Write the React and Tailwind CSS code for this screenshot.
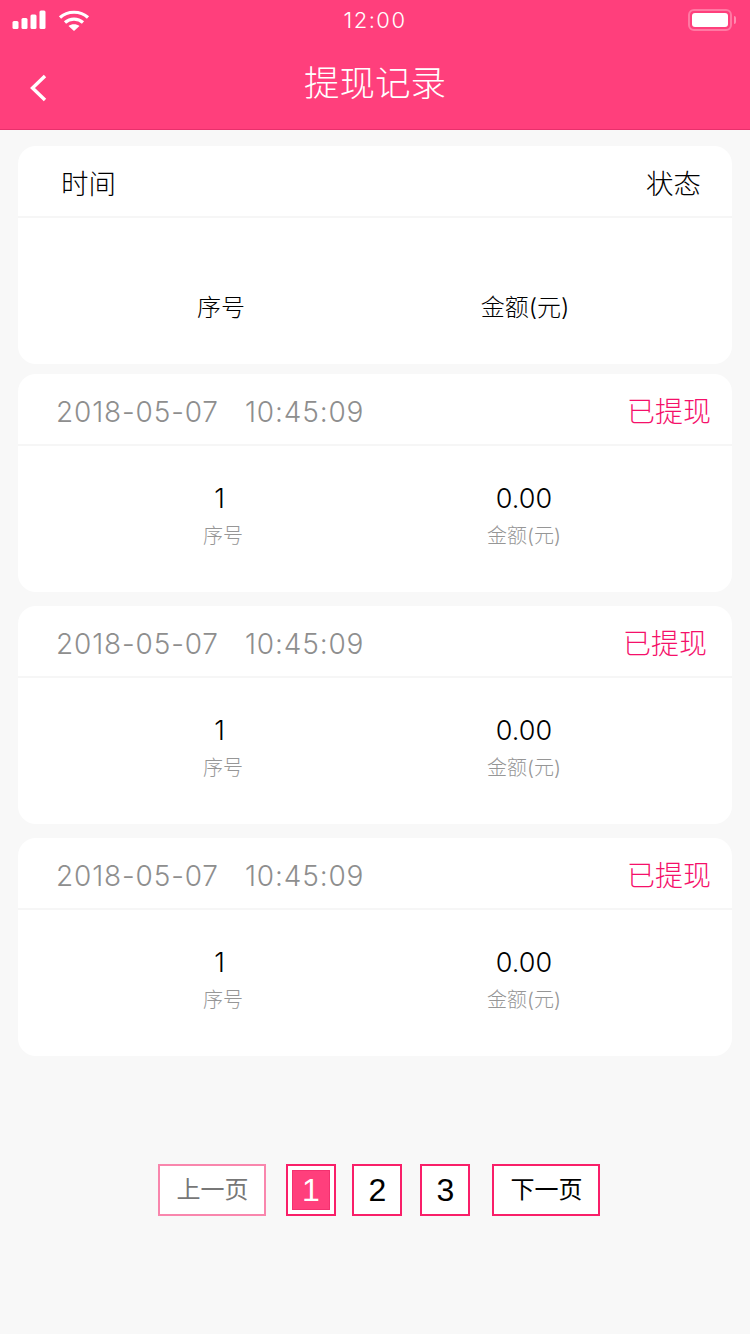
import React from "react";

const font = "font-['Inter','Noto_Sans_CJK_SC',sans-serif]";
const digitFont = "font-['Liberation_Sans','Noto_Sans_CJK_SC',sans-serif]";

const records = [
  { statusPad: "pr-[21px]", margin: "mt-[10px]" },
  { statusPad: "pr-[25px]", margin: "mt-[14px]" },
  { statusPad: "pr-[21px]", margin: "mt-[14px]" },
];

const StatusBar = () => (
  <div className="relative flex h-10 items-center justify-between pl-3 pr-[14px]">
    <div className="flex items-center gap-3">
      <svg width="34" height="20" viewBox="0 0 34 20" fill="white">
        <rect x="0.5" y="11" width="6" height="8" rx="1.5" />
        <rect x="9.5" y="8" width="6" height="11" rx="1.5" />
        <rect x="18.5" y="4.5" width="6" height="14.5" rx="1.5" />
        <rect x="27.5" y="0.5" width="6" height="18.5" rx="1.5" />
      </svg>
      <svg width="32" height="22" viewBox="0 0 32 22" fill="none" stroke="white">
        <path d="M2 8.5C9.5 1.5 22.5 1.5 30 8.5" strokeWidth="3.2" />
        <path d="M7 13.5C12 9 20 9 25 13.5" strokeWidth="3.2" />
        <path d="M16 22L10.5 17C13.5 14.5 18.5 14.5 21.5 17Z" fill="white" stroke="none" />
      </svg>
    </div>
    <span className="absolute left-0 right-0 top-[6px] text-center text-[22px] font-light leading-7 tracking-[1.5px] text-white">
      12:00
    </span>
    <div className="flex items-center gap-[2px]">
      <div className="h-[22px] w-[44px] rounded-[6px] border-2 border-white/30 p-[2px]">
        <div className="h-full w-full rounded-[3px] bg-white" />
      </div>
      <div className="h-2 w-[2px] rounded-r-full bg-white/40" />
    </div>
  </div>
);

const Header = () => (
  <div className="bg-[#ff3f7c] border-b border-[#e8306c]">
    <StatusBar />
    <div className="relative flex h-[89px] items-center justify-center pb-[2px]">
      <svg
        className="absolute left-[29px] top-[34px]"
        width="18"
        height="28"
        viewBox="0 0 18 28"
        fill="none"
        stroke="white"
        strokeWidth="3.4"
      >
        <path d="M16 2L3.5 14L16 26" />
      </svg>
      <h1 className="text-[35.5px] font-light leading-10 text-white">提现记录</h1>
    </div>
  </div>
);

const RecordCard = ({ statusPad, margin }) => (
  <div className={`h-[218px] rounded-[18px] bg-white ${margin}`}>
    <div className={`flex h-[72px] items-center justify-between border-b-2 border-[#f6f6f6] pl-[38px] pt-[6px] ${statusPad}`}>
      <span className="whitespace-pre text-[28px] font-light tracking-[0.85px] text-[#8e8e8e]">2018-05-07   10:45:09</span>
      <span className="text-[28px] font-light text-[#f5106a]">已提现</span>
    </div>
    <div className="flex pt-[34px]">
      <div className="ml-[135px] w-[140px] text-center">
        <p className="pr-[7px] text-[27px] font-light leading-[38px] text-black">1</p>
        <p className="text-[20px] font-light leading-[36px] text-[#969696]">序号</p>
      </div>
      <div className="ml-[161px] w-[140px] text-center">
        <p className="text-[27px] font-light leading-[38px] text-black">0.00</p>
        <p className="text-[20px] font-light leading-[36px] text-[#969696]">金额(元)</p>
      </div>
    </div>
  </div>
);

const Pagination = () => (
  <div className={`mt-[108px] flex justify-center pl-2 ${digitFont}`}>
    <button className="h-[52px] w-[108px] border-2 border-[#f986ad] bg-white pl-[1px] text-[24px] text-[#777]">上一页</button>
    <button className="ml-5 h-[52px] w-[50px] border-2 border-[#f91f69] bg-white p-1">
      <span className="flex h-full w-full items-center justify-center border border-[#f3306f] bg-[#ff3f7c] text-[32px] text-white">1</span>
    </button>
    <button className="ml-4 h-[52px] w-[50px] border-2 border-[#f91f69] bg-white pl-[1px] text-[32px] text-black">2</button>
    <button className="ml-[18px] h-[52px] w-[50px] border-2 border-[#f91f69] bg-white pl-[1px] text-[32px] text-black">3</button>
    <button className="ml-[22px] h-[52px] w-[108px] border-2 border-[#f91f69] bg-white pl-[1px] text-[24px] text-black">下一页</button>
  </div>
);

const App = () => {
  return (
    <div className={`h-[1334px] w-[750px] overflow-hidden bg-[#f8f8f8] ${font}`}>
      <Header />
      <div className="px-[18px] pt-4">
        {/* table head card */}
        <div className="h-[218px] rounded-[18px] bg-white">
          <div className="flex h-[72px] items-center justify-between border-b-2 border-[#f6f6f6] pl-[43px] pr-[31px] pt-[8px] text-[27.5px] font-light text-black">
            <span>时间</span>
            <span>状态</span>
          </div>
          <div className="flex pt-[70px] text-[24px] font-light leading-10 text-black">
            <div className="ml-[130px] w-[146px] text-center">序号</div>
            <div className="ml-[158px] w-[146px] text-center">金额(元)</div>
          </div>
        </div>
        {records.map((r, i) => (
          <RecordCard key={i} {...r} />
        ))}
        <Pagination />
      </div>
    </div>
  );
};

export default App;
